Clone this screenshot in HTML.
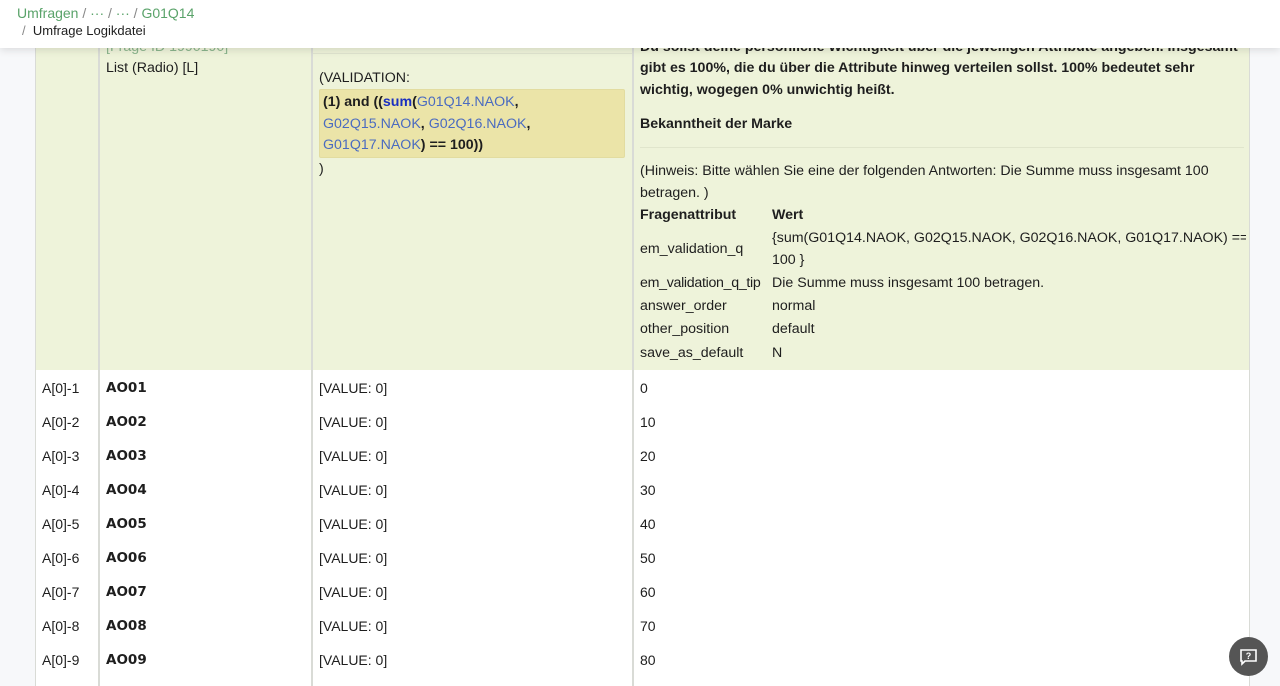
<!DOCTYPE html>
<html><head><meta charset="utf-8"><style>
*{margin:0;padding:0;box-sizing:border-box}
body{width:1280px;height:686px;overflow:hidden;background:#f7f8fa;font-family:"Liberation Sans",sans-serif;color:#1e1e1e;position:relative}
.a{position:absolute;white-space:nowrap}
.t{font-size:14.2px;line-height:21px}
.s{font-size:14px}
.b{font-weight:bold}
.vl{position:absolute;top:0;width:2px;height:686px;background:#d9dbd6}
.blue{color:#4a6bc0}
</style></head><body>
<div style="position:absolute;left:35px;top:0;width:1215px;height:370px;background:#eef3da"></div>
<div style="position:absolute;left:35px;top:370px;width:1215px;height:316px;background:#fff"></div>
<div class="vl" style="left:35px;width:1px"></div>
<div class="vl" style="left:98px"></div>
<div class="vl" style="left:311px"></div>
<div class="vl" style="left:632px"></div>
<div class="vl" style="left:1249px;width:1px"></div>
<div style="position:absolute;left:313px;top:53px;width:319px;height:1px;background:#dfe3cf"></div>

<div class="a t" style="left:106px;top:37px;color:#8bb58d">[Frage ID 1990190]</div>
<div class="a t" style="left:106px;top:58px">List (Radio) [L]</div>
<div class="a t" style="left:319px;top:68px">(VALIDATION:</div>
<div style="position:absolute;left:319px;top:89px;width:306px;height:69px;background:#ebe4a8;border:1px solid #e2dca0;border-radius:2px"></div>
<div class="a t b" style="left:323px;top:92px">(1) and ((<span style="color:#1a2fc0">sum</span>(<span class="blue" style="font-weight:normal">G01Q14.NAOK</span>,</div>
<div class="a t" style="left:323px;top:114px"><span class="blue">G02Q15.NAOK</span><b>,</b> <span class="blue">G02Q16.NAOK</span><b>,</b></div>
<div class="a t" style="left:323px;top:135px"><span class="blue">G01Q17.NAOK</span><b>) == 100))</b></div>
<div class="a t" style="left:319px;top:159px">)</div>

<div style="position:absolute;left:634px;top:0;width:612px;height:370px;overflow:hidden">
<div class="a t b" style="left:6px;top:37px">Du sollst deine persönliche Wichtigkeit über die jeweiligen Attribute angeben. Insgesamt</div>
<div class="a t b" style="left:6px;top:58px">gibt es 100%, die du über die Attribute hinweg verteilen sollst. 100% bedeutet sehr</div>
<div class="a t b" style="left:6px;top:80px">wichtig, wogegen 0% unwichtig heißt.</div>
<div class="a t b" style="left:6px;top:114px">Bekanntheit der Marke</div>
<div style="position:absolute;left:6px;top:147px;width:604px;height:1px;background:#e0e5cc"></div>
<div class="a t" style="left:6px;top:161px">(Hinweis: Bitte wählen Sie eine der folgenden Antworten: Die Summe muss insgesamt 100</div>
<div class="a t" style="left:6px;top:183px">betragen. )</div>
<div class="a t b" style="left:6px;top:205px">Fragenattribut</div><div class="a t b" style="left:138px;top:205px">Wert</div>
<div class="a t" style="left:6px;top:239px">em_validation_q</div>
<div class="a t" style="left:138px;top:228px">{sum(G01Q14.NAOK, G02Q15.NAOK, G02Q16.NAOK, G01Q17.NAOK) ==</div>
<div class="a t" style="left:138px;top:250px">100 }</div>
<div class="a t" style="left:6px;top:273px;letter-spacing:-0.3px">em_validation_q_tip</div><div class="a t" style="left:138px;top:273px">Die Summe muss insgesamt 100 betragen.</div>
<div class="a t" style="left:6px;top:296px">answer_order</div><div class="a t" style="left:138px;top:296px">normal</div>
<div class="a t" style="left:6px;top:319px">other_position</div><div class="a t" style="left:138px;top:319px">default</div>
<div class="a t" style="left:6px;top:343px">save_as_default</div><div class="a t" style="left:138px;top:343px">N</div>
</div>

<div class="a s" style="left:42px;top:371px;line-height:34px;white-space:pre">A[0]-1
A[0]-2
A[0]-3
A[0]-4
A[0]-5
A[0]-6
A[0]-7
A[0]-8
A[0]-9</div>
<div class="a s b" style="left:106px;top:371px;line-height:34px;white-space:pre;font-family:'DejaVu Sans',sans-serif;font-size:13.5px">AO01
AO02
AO03
AO04
AO05
AO06
AO07
AO08
AO09</div>
<div class="a s" style="left:319px;top:371px;line-height:34px;white-space:pre">[VALUE: 0]
[VALUE: 0]
[VALUE: 0]
[VALUE: 0]
[VALUE: 0]
[VALUE: 0]
[VALUE: 0]
[VALUE: 0]
[VALUE: 0]</div>
<div class="a s" style="left:640px;top:371px;line-height:34px;white-space:pre">0
10
20
30
40
50
60
70
80</div>

<div style="position:absolute;left:0;top:0;width:1280px;height:48px;background:#fff;box-shadow:0 2px 8px rgba(0,0,0,0.12)"></div>
<div class="a" style="left:17px;top:4px;font-size:14px;line-height:18px;color:#5aa36a">Umfragen <span style="color:#888">/</span> ··· <span style="color:#888">/</span> ··· <span style="color:#888">/</span> G01Q14</div>
<div class="a" style="left:22px;top:22px;font-size:13px;line-height:18px;color:#1e1e1e"><span style="color:#888">/</span>&nbsp; Umfrage Logikdatei</div>

<div style="position:absolute;left:1229px;top:637px;width:39px;height:39px;border-radius:50%;background:#555">
<svg width="39" height="39" viewBox="0 0 39 39"><path d="M12 13h15v11h-11l-3 3v-3h-1z" fill="none" stroke="#fff" stroke-width="1.6"/><text x="19.5" y="22" font-size="9" font-weight="bold" fill="#fff" text-anchor="middle" font-family="Liberation Sans">?</text></svg>
</div>
</body></html>
